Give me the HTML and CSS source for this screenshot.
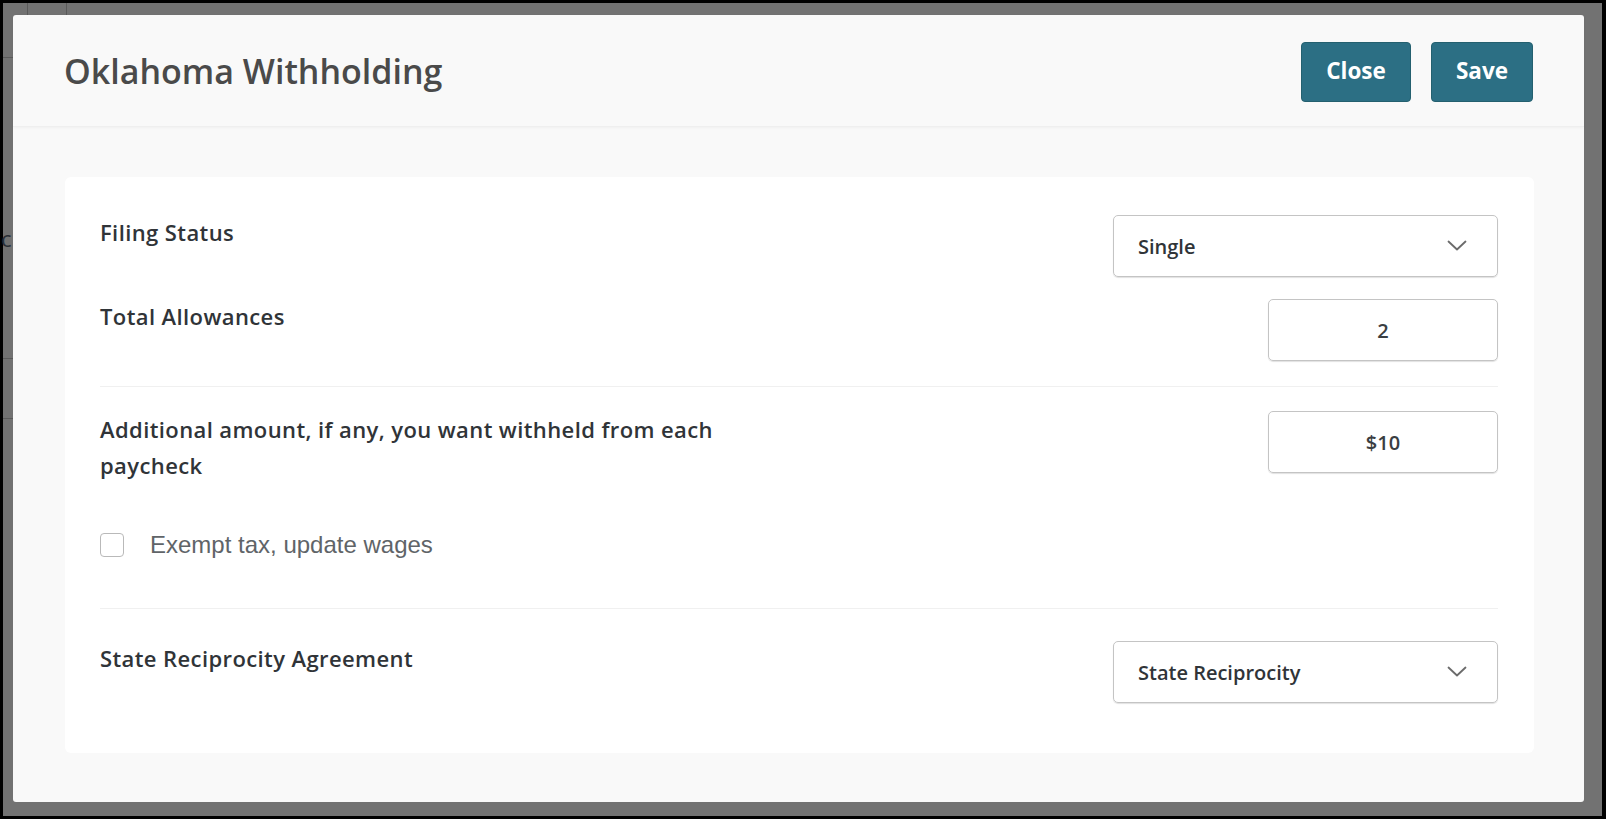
FILE: index.html
```html
<!DOCTYPE html>
<html lang="en">

<head>
    <meta charset="UTF-8">
    <meta name="viewport" content="width=device-width, initial-scale=1.0">
    <title>Oklahoma Withholding</title>
    <link rel="stylesheet" href="styles.css">
</head>

<body>
    <div class="backdrop">
        <!-- bits of the page behind the overlay -->
        <div class="bg-line bg-v1"></div>
        <div class="bg-line bg-v2"></div>
        <div class="bg-line bg-h1"></div>
        <div class="bg-line bg-h2"></div>
        <div class="bg-line bg-h3"></div>
        <span class="bg-char">c</span>

        <div class="modal">
            <div class="modal-header">
                <h1>Oklahoma Withholding</h1>
                <div class="header-buttons">
                    <button class="btn">Close</button>
                    <button class="btn">Save</button>
                </div>
            </div>

            <div class="modal-body">
                <div class="card">
                    <div class="form-row">
                        <label class="field-label">Filing Status</label>
                        <div class="select-box">
                            <span>Single</span>
                            <svg class="chevron" width="20" height="12" viewBox="0 0 20 12">
                                <polyline points="1.5,1.5 10,9.5 18.5,1.5" fill="none" stroke="#6b6b6b" stroke-width="1.8" stroke-linecap="round" stroke-linejoin="round" />
                            </svg>
                        </div>
                    </div>

                    <div class="form-row row-gap">
                        <label class="field-label">Total Allowances</label>
                        <div class="text-box">2</div>
                    </div>

                    <div class="divider"></div>

                    <div class="form-row">
                        <label class="field-label wrap-label">Additional amount, if any, you want withheld from each paycheck</label>
                        <div class="text-box">$10</div>
                    </div>

                    <div class="check-row">
                        <span class="checkbox"></span>
                        <span class="check-text">Exempt tax, update wages</span>
                    </div>

                    <div class="divider divider-lower"></div>

                    <div class="form-row">
                        <label class="field-label">State Reciprocity Agreement</label>
                        <div class="select-box">
                            <span>State Reciprocity</span>
                            <svg class="chevron" width="20" height="12" viewBox="0 0 20 12">
                                <polyline points="1.5,1.5 10,9.5 18.5,1.5" fill="none" stroke="#6b6b6b" stroke-width="1.8" stroke-linecap="round" stroke-linejoin="round" />
                            </svg>
                        </div>
                    </div>
                </div>
            </div>
        </div>
    </div>
</body>

</html>
```

FILE: styles.css
```css
body {
    margin: 0;
    padding: 3px 4px 3px 3px;
    background-color: #000;
    font-family: "Open Sans", Lato, sans-serif;
    color: #303438;
}

.backdrop {
    position: relative;
    height: 813px;
    box-sizing: border-box;
    padding: 12px 18px 14px 10px;
    background-color: #727272;
}

.bg-line {
    position: absolute;
    background-color: #5a5a5a;
}

.bg-v1 {
    left: 24px;
    top: 0;
    width: 1px;
    height: 12px;
}

.bg-v2 {
    left: 63px;
    top: 0;
    width: 1px;
    height: 12px;
}

.bg-h1 {
    left: 0;
    top: 54px;
    width: 10px;
    height: 1px;
}

.bg-h2 {
    left: 0;
    top: 355px;
    width: 10px;
    height: 1px;
}

.bg-h3 {
    left: 0;
    top: 415px;
    width: 10px;
    height: 1px;
}

.bg-char {
    position: absolute;
    left: -2px;
    top: 220px;
    font-size: 22px;
    color: #2a2f36;
}

.modal {
    height: 100%;
    background-color: #f9f9f9;
    border-radius: 3px;
    display: flex;
    flex-direction: column;
}

.modal-header {
    height: 112px;
    box-sizing: border-box;
    display: flex;
    justify-content: space-between;
    align-items: flex-start;
    padding: 27px 51px 0 51px;
    border-bottom: 1px solid #efefef;
    box-shadow: 0 1px 3px rgba(0, 0, 0, 0.04);
}

.modal-header h1 {
    margin: 6px 0 0 0;
    font-size: 34px;
    font-weight: 600;
    color: #4a4a4a;
}

.header-buttons {
    display: flex;
    gap: 20px;
}

.btn {
    height: 60px;
    padding: 0 0 4px 0;
    width: 110px;
    background-color: #2c6f84;
    color: white;
    border: 1px solid #24606f;
    border-radius: 4px;
    font-family: "Open Sans", sans-serif;
    font-size: 22.5px;
    font-weight: 700;
}

.btn + .btn {
    width: 102px;
}

.modal-body {
    padding: 50px 50px 49px 52px;
    flex: 1;
    display: flex;
}

.card {
    flex: 1;
    background-color: white;
    border-radius: 6px;
    padding: 38px 36px 49px 35px;
}

.form-row {
    display: flex;
    justify-content: space-between;
    align-items: flex-start;
}

.row-gap {
    margin-top: 22px;
}

.field-label {
    font-size: 22px;
    font-weight: 600;
    letter-spacing: 0.4px;
    line-height: 34px;
    color: #303438;
}

.wrap-label {
    width: 630px;
    line-height: 36px;
}

.select-box {
    width: 385px;
    height: 62px;
    box-sizing: border-box;
    border: 1px solid #c4c4c4;
    border-radius: 5px;
    box-shadow: 0 1px 1px rgba(0, 0, 0, 0.12);
    display: flex;
    justify-content: space-between;
    align-items: center;
    padding: 0 30px 0 24px;
    font-size: 20px;
    font-weight: 600;
    color: #303438;
}

.text-box {
    width: 230px;
    height: 62px;
    box-sizing: border-box;
    border: 1px solid #c4c4c4;
    border-radius: 5px;
    box-shadow: 0 1px 1px rgba(0, 0, 0, 0.12);
    display: flex;
    justify-content: center;
    align-items: center;
    font-size: 20px;
    font-weight: 600;
    color: #3a3e42;
}

.divider {
    height: 1px;
    background-color: #f0f0f0;
    margin: 25px 0 24px 0;
}

.divider-lower {
    margin: 49px 0 32px 0;
}

.check-row {
    display: flex;
    align-items: center;
    margin-top: 48px;
}

.checkbox {
    width: 24px;
    height: 24px;
    box-sizing: border-box;
    border: 1.5px solid #b9b9b9;
    border-radius: 4px;
    background-color: white;
}

.check-text {
    margin-left: 26px;
    font-family: "Liberation Sans", Arial, sans-serif;
    font-size: 24px;
    color: #606468;
}
```
